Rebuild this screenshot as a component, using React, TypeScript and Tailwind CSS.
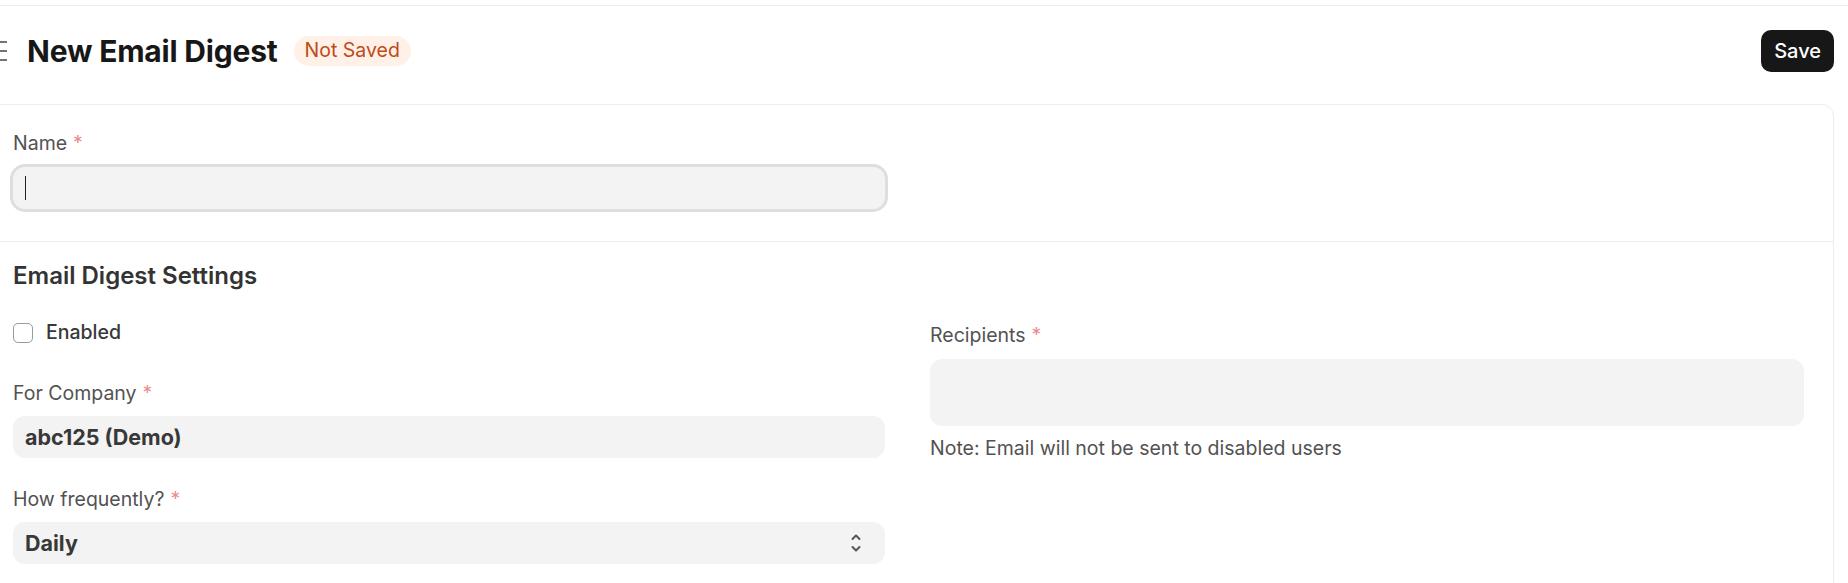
import React from 'react';

const Req: React.FC = () => <span className="ml-[6px] text-[#eb8c8c]">*</span>;

const Label: React.FC<{ children: React.ReactNode }> = ({ children }) => (
  <div className="text-[19.5px] leading-[24px] text-[#525252]">
    {children}
    <Req />
  </div>
);

const App: React.FC = () => {
  return (
    <div className="min-h-[583px] overflow-hidden bg-white font-['Inter','Liberation_Sans',sans-serif] text-[#171717]">
      <div className="h-[6px] border-b border-[#ededed]" />

      <div className="ml-[-17px] mr-[14px]">
        {/* page head */}
        <div className="flex items-center justify-between pt-[24px] pb-[32px]">
          <div className="flex items-center">
            <svg className="ml-[8px] h-[20px] w-[16px] text-[#444]" viewBox="0 0 16 20" fill="none" stroke="currentColor" strokeWidth="1.6">
              <path d="M0 1h16M0 10h16M0 19h16" />
            </svg>
            <h1 className="ml-[20px] text-[30px] font-bold leading-[36px] tracking-[-0.2px] text-[#171717]">New Email Digest</h1>
            <span className="ml-[16px] flex h-[30px] items-center rounded-full bg-[#fff1e7] px-[11px] text-[19.5px] text-[#bf4a1a]">
              Not Saved
            </span>
          </div>
          <button className="h-[42px] rounded-[10px] bg-[#171717] px-[13px] text-[20px] font-medium text-white">Save</button>
        </div>

        {/* form card */}
        <div className="rounded-t-[12px] border border-[#ededed]">
          <div className="border-b border-[#ededed] px-[29px] pt-[26px] pb-[32px]">
            <div className="grid grid-cols-[872px_1fr] gap-[45px]">
              <div>
                <Label>Name</Label>
                <div className="mt-[12px] flex h-[42px] items-center rounded-[12px] bg-[#f3f3f3] px-[12px] shadow-[0_0_0_3px_#dedede]">
                  <span className="h-[24px] w-[1px] bg-[#222]" />
                </div>
              </div>
              <div />
            </div>
          </div>

          <div className="px-[29px] pt-[19px] pb-[20px]">
            <h2 className="text-[24px] font-semibold leading-[30px] text-[#333]">Email Digest Settings</h2>
            <div className="mt-[30px] grid grid-cols-[872px_1fr] gap-[45px]">
              <div>
                <label className="flex h-[24px] items-center">
                  <span className="h-[20px] w-[20px] rounded-[5px] border-[1.5px] border-[#9a9a9a] bg-white" />
                  <span className="ml-[13px] text-[19.5px] font-medium text-[#383838]">Enabled</span>
                </label>

                <div className="mt-[36px]">
                  <Label>For Company</Label>
                  <div className="mt-[11px] flex h-[42px] items-center rounded-[12px] bg-[#f3f3f3] px-[12px] text-[21.5px] font-bold text-[#383838]">
                    abc125 (Demo)
                  </div>
                </div>

                <div className="mt-[29px]">
                  <Label>How frequently?</Label>
                  <div className="mt-[11px] flex h-[42px] items-center justify-between rounded-[12px] bg-[#f3f3f3] pl-[12px] pr-[24px] text-[21.5px] font-bold text-[#383838]">
                    <span>Daily</span>
                    <svg className="h-[20px] w-[10px]" viewBox="0 0 10 20" fill="none" stroke="#555" strokeWidth="2" strokeLinecap="round" strokeLinejoin="round">
                      <path d="M1.5 6l3.5-3.5L8.5 6" />
                      <path d="M1.5 14l3.5 3.5L8.5 14" />
                    </svg>
                  </div>
                </div>
              </div>

              <div className="pt-[2px]">
                <Label>Recipients</Label>
                <div className="mt-[12px] h-[67px] rounded-[12px] bg-[#f3f3f3]" />
                <p className="mt-[10px] text-[19.5px] leading-[24px] text-[#525252]">Note: Email will not be sent to disabled users</p>
              </div>
            </div>
          </div>
        </div>
      </div>
    </div>
  );
};

export default App;
